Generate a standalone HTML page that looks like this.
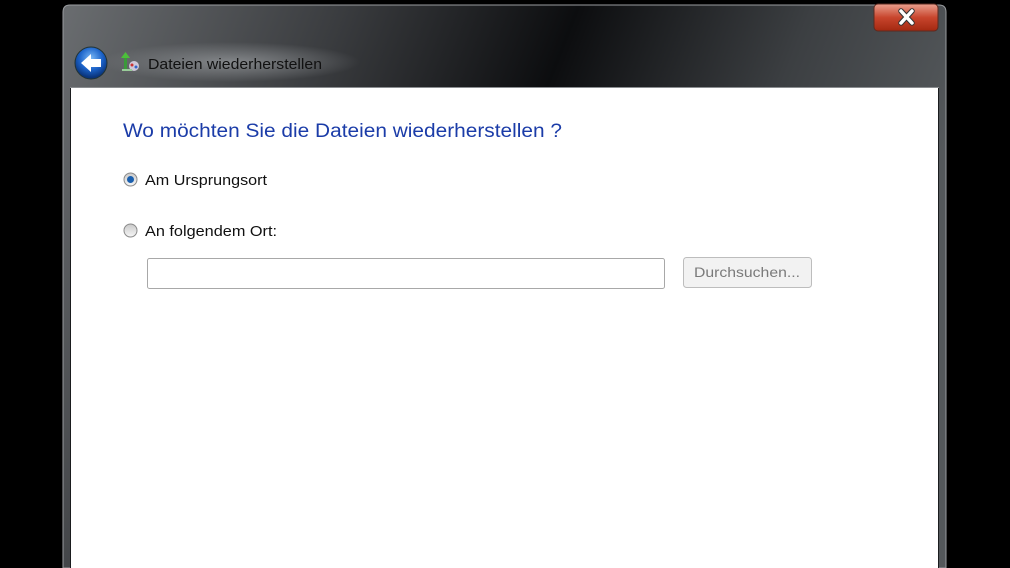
<!DOCTYPE html>
<html><head><meta charset="utf-8"><style>
html,body{margin:0;padding:0;background:#000;width:1010px;height:568px;overflow:hidden}
svg{display:block}
</style></head><body>
<svg width="1010" height="568" viewBox="0 0 1010 568" xmlns="http://www.w3.org/2000/svg" font-family="Liberation Sans, sans-serif">
<defs>
<linearGradient id="fr" x1="0" y1="0" x2="1" y2="0.25">
<stop offset="0" stop-color="#6a6d70"/>
<stop offset="0.3" stop-color="#3a3c3f"/>
<stop offset="0.55" stop-color="#0c0d0f"/>
<stop offset="0.8" stop-color="#3c3f42"/>
<stop offset="1" stop-color="#54585b"/>
</linearGradient>
<radialGradient id="glow" cx="0.5" cy="0.5" r="0.5">
<stop offset="0" stop-color="#8a8d90" stop-opacity="0.9"/>
<stop offset="1" stop-color="#8a8d90" stop-opacity="0"/>
</radialGradient>
<linearGradient id="cl" x1="0" y1="0" x2="0" y2="1">
<stop offset="0" stop-color="#e9a08e"/>
<stop offset="0.5" stop-color="#c8452d"/>
<stop offset="1" stop-color="#a32810"/>
</linearGradient>
<radialGradient id="bk" cx="0.5" cy="0.35" r="0.6">
<stop offset="0" stop-color="#7ab8f5"/>
<stop offset="0.6" stop-color="#1b62c9"/>
<stop offset="1" stop-color="#0a347a"/>
</radialGradient>
<linearGradient id="rg" x1="0" y1="0" x2="0" y2="1">
<stop offset="0" stop-color="#c9c9c9"/>
<stop offset="1" stop-color="#f7f7f7"/>
</linearGradient>
</defs>
<rect width="1010" height="568" fill="#000"/>
<path d="M63 568 V12 Q63 5 70 5 H939 Q946 5 946 12 V568 Z" fill="url(#fr)" stroke="#9a9da0" stroke-width="1"/>
<ellipse cx="230" cy="62" rx="130" ry="20" fill="url(#glow)"/>
<rect x="874" y="4" width="64" height="27" rx="4" fill="url(#cl)" stroke="#5b2a20"/>
<path d="M901 11 L912 23 M912 11 L901 23" stroke="#333" stroke-width="5.5" stroke-linecap="round"/>
<path d="M901 11 L912 23 M912 11 L901 23" stroke="#fff" stroke-width="3.5" stroke-linecap="round"/>
<circle cx="91" cy="63" r="16" fill="url(#bk)" stroke="#233" stroke-width="1"/>
<path d="M81 63 L91 54 L91 59 H101 V67 H91 V72 Z" fill="#fff"/>
<rect x="124" y="56" width="3" height="13" fill="#3a9a3a"/>
<path d="M121 58 L125.5 52 L130 58 Z" fill="#4cbf3a"/>
<circle cx="134" cy="66" r="5" fill="#cfc8d8"/>
<circle cx="132" cy="65" r="1.5" fill="#c33"/><circle cx="136" cy="67" r="1.5" fill="#36c"/>
<rect x="122" y="69" width="10" height="2" fill="#9c9"/>
<text x="148" y="69" font-size="15" fill="#111" textLength="174" lengthAdjust="spacingAndGlyphs">Dateien wiederherstellen</text>
<rect x="71" y="88" width="867" height="480" fill="#fff"/>
<line x1="70.5" y1="88" x2="70.5" y2="568" stroke="#1a1c1e"/>
<line x1="938.5" y1="88" x2="938.5" y2="568" stroke="#1a1c1e"/>
<line x1="70" y1="87.5" x2="939" y2="87.5" stroke="#8a8d90"/>
<text x="123" y="137" font-size="19" fill="#1b3ca8" textLength="439" lengthAdjust="spacingAndGlyphs">Wo möchten Sie die Dateien wiederherstellen ?</text>
<circle cx="130.5" cy="179.5" r="6.5" fill="url(#rg)" stroke="#8a8a8a"/>
<circle cx="130.5" cy="179.5" r="3.5" fill="#1a5fae"/>
<text x="145" y="185" font-size="14.5" fill="#111" textLength="122" lengthAdjust="spacingAndGlyphs">Am Ursprungsort</text>
<circle cx="130.5" cy="230.5" r="6.5" fill="url(#rg)" stroke="#8a8a8a"/>
<text x="145" y="236" font-size="14.5" fill="#111" textLength="132" lengthAdjust="spacingAndGlyphs">An folgendem Ort:</text>
<rect x="147.5" y="258.5" width="517" height="30" rx="2" fill="#fff" stroke="#a8a8a8"/>
<rect x="683.5" y="257.5" width="128" height="30" rx="3" fill="#f2f2f2" stroke="#bdbdbd"/>
<text x="747" y="277" font-size="14" fill="#7a7a7a" text-anchor="middle" textLength="106" lengthAdjust="spacingAndGlyphs">Durchsuchen...</text>
</svg>
</body></html>
